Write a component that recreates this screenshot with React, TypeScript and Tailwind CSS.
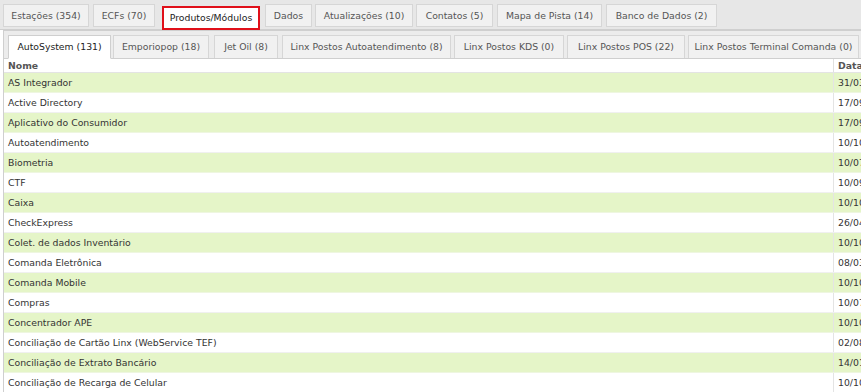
import React from "react";

const topTabs = [
  { label: "Estações (354)", w: 86, ml: "ml-[3px]" },
  { label: "ECFs (70)", w: 62, ml: "ml-[4px]" },
  { label: "Produtos/Módulos", w: 98, ml: "ml-[7px]", active: true },
  { label: "Dados", w: 47, ml: "ml-[5px]" },
  { label: "Atualizações (10)", w: 98, ml: "ml-[3px]" },
  { label: "Contatos (5)", w: 77, ml: "ml-[3px]" },
  { label: "Mapa de Pista (14)", w: 105, ml: "ml-[4px]" },
  { label: "Banco de Dados (2)", w: 111, ml: "ml-[4px]" },
];

const subTabs = [
  { label: "AutoSystem (131)", w: 103, ml: "ml-[4px]", active: true },
  { label: "Emporiopop (18)", w: 96, ml: "ml-[2px]" },
  { label: "Jet Oil (8)", w: 64, ml: "ml-[5px]" },
  { label: "Linx Postos Autoatendimento (8)", w: 169, ml: "ml-[4px]" },
  { label: "Linx Postos KDS (0)", w: 110, ml: "ml-[3px]" },
  { label: "Linx Postos POS (22)", w: 118, ml: "ml-[3px]" },
  { label: "Linx Postos Terminal Comanda (0)", w: 171, ml: "ml-[3px]" },
];

const rows: [string, string][] = [
  ["AS Integrador", "31/03/2020"],
  ["Active Directory", "17/09/2019"],
  ["Aplicativo do Consumidor", "17/09/2019"],
  ["Autoatendimento", "10/10/2019"],
  ["Biometria", "10/07/2019"],
  ["CTF", "10/09/2019"],
  ["Caixa", "10/10/2019"],
  ["CheckExpress", "26/04/2019"],
  ["Colet. de dados Inventário", "10/10/2019"],
  ["Comanda Eletrônica", "08/03/2019"],
  ["Comanda Mobile", "10/10/2019"],
  ["Compras", "10/07/2019"],
  ["Concentrador APE", "10/10/2019"],
  ["Conciliação de Cartão Linx (WebService TEF)", "02/08/2019"],
  ["Conciliação de Extrato Bancário", "14/01/2020"],
  ["Conciliação de Recarga de Celular", "10/10/2019"],
];

export default function App() {
  return (
    <div
      className="w-[861px] h-[392px] overflow-hidden bg-white text-[#333] text-[9.3px]"
      style={{ fontFamily: '"DejaVu Sans", Verdana, sans-serif' }}
    >
      {/* top tab bar */}
      <div className="h-[30px] bg-[#e7e7e7] flex items-end border-b border-[#cfcfcf]">
        {topTabs.map((t) =>
          t.active ? (
            <div
              key={t.label}
              className={t.ml + " h-[24px] mb-[-1px] shrink-0 flex items-center justify-center whitespace-nowrap bg-white border-2 border-[#e0101a] text-[#222]"}
              style={{ width: t.w }}
            >
              {t.label}
            </div>
          ) : (
            <div
              key={t.label}
              className={t.ml + " h-[23px] mb-[2px] shrink-0 flex items-center justify-center whitespace-nowrap bg-[#f1f1f1] border border-[#d6d6d6] text-[#555]"}
              style={{ width: t.w }}
            >
              {t.label}
            </div>
          )
        )}
      </div>
      {/* panel */}
      <div className="ml-[3px] border-l border-t border-[#cfcfcf]">
        <div className="h-[28px] bg-[#ececec] flex items-end border-b border-[#cfcfcf]">
          {subTabs.map((t) =>
            t.active ? (
              <div
                key={t.label}
                className={t.ml + " h-[24px] mb-[-1px] shrink-0 flex items-center justify-center whitespace-nowrap bg-white border border-[#cfcfcf] border-b-white text-[#222]"}
                style={{ width: t.w }}
              >
                {t.label}
              </div>
            ) : (
              <div
                key={t.label}
                className={t.ml + " h-[23px] shrink-0 flex items-center justify-center whitespace-nowrap bg-[#f1f1f1] border border-[#d6d6d6] border-b-0 text-[#555]"}
                style={{ width: t.w }}
              >
                {t.label}
              </div>
            )
          )}
        </div>
        <div className="flex h-[14px] items-center bg-white border-b border-[#e4e4e4]">
          <div className="w-[829px] shrink-0 pl-[4px] font-bold text-[#555]">Nome</div>
          <div className="flex-1 h-full flex items-center pl-[4px] border-l border-[#e0e0e0] font-bold text-[#555] whitespace-nowrap overflow-hidden">
            Data
          </div>
        </div>
        {rows.map(([n, d], i) => (
          <div
            key={n}
            className={
              "flex h-[20px] items-center border-b " +
              (i % 2 === 0 ? "bg-[#e5f5c8] border-[#eef6e0]" : "bg-white border-[#f0f0f0]")
            }
          >
            <div className="w-[829px] shrink-0 pl-[4px] whitespace-nowrap">{n}</div>
            <div className="flex-1 pl-[4px] border-l border-[#e4e4e4] whitespace-nowrap overflow-hidden h-full flex items-center">
              {d}
            </div>
          </div>
        ))}
      </div>
    </div>
  );
}
